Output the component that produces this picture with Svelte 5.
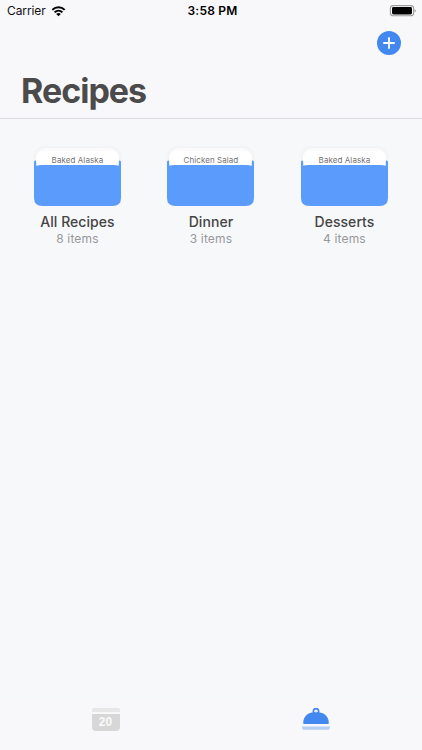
<script lang="ts">
  type Folder = { name: string; count: number; preview: string }

  const folders: Folder[] = [
    { name: 'All Recipes', count: 8, preview: 'Baked Alaska' },
    { name: 'Dinner', count: 3, preview: 'Chicken Salad' },
    { name: 'Desserts', count: 4, preview: 'Baked Alaska' },
  ]
</script>

<div class="screen">
  <header>
    <div class="status-bar">
      <div class="carrier">
        <span>Carrier</span>
        <svg width="15" height="11" viewBox="0 0 14 11">
          <g fill="none" stroke="#000" stroke-width="2">
            <path d="M0.8 3.9C4.3 0.5 9.7 0.5 13.2 3.9" />
            <path d="M3.1 6.4C5.3 4.3 8.7 4.3 10.9 6.4" />
          </g>
          <path d="M7 10.2L4.7 8C6 6.8 8 6.8 9.3 8Z" />
        </svg>
      </div>
      <span class="time">3:58 PM</span>
      <svg class="battery" width="28" height="12" viewBox="0 0 28 12">
        <rect x="1.4" y="0.6" width="23.2" height="10.2" rx="2.8" fill="#fff" stroke="#9b9b9d" stroke-width="1.1" />
        <rect x="3" y="2" width="20" height="7.4" rx="1.4" />
        <path d="M25.6 4C27.2 4.5 27.2 7 25.6 7.5Z" fill="#9b9b9d" />
      </svg>
    </div>

    <div class="actions">
      <button class="add" aria-label="Add folder">
        <svg width="24" height="24" viewBox="0 0 24 24">
          <path d="M12 6.9V17.1M6.9 12H17.1" stroke="#fff" stroke-width="1.8" stroke-linecap="round" />
        </svg>
      </button>
    </div>

    <h1>Recipes</h1>
  </header>

  <main>
    {#each folders as folder}
      <div class="item">
        <div class="folder">
          <div class="cards">
            <div class="card">{folder.preview}</div>
          </div>
          <svg class="pocket" width="87" height="47" viewBox="0 0 87 47">
            <path
              d="M0 2.4Q0 0.8 1.2 0.6Q2.2 0.6 2.2 2V5.8Q4.5 5 8 5H79Q82.5 5 84.8 5.8V2Q84.8 0.6 85.8 0.6Q87 0.8 87 2.4V38Q87 46 78.5 46H8.5Q0 46 0 38Z"
              fill="#5a9bfc"
            />
          </svg>
        </div>
        <div class="name">{folder.name}</div>
        <div class="count">{folder.count} items</div>
      </div>
    {/each}
  </main>

  <nav>
    <button class="tab" aria-label="Calendar">
      <div class="calendar">
        <div class="calendar-top"></div>
        <div class="calendar-page">20</div>
      </div>
    </button>
    <button class="tab" aria-label="Recipes">
      <svg width="28" height="23" viewBox="0 0 28 23">
        <circle cx="14" cy="3.2" r="2.6" fill="none" stroke="#4288ef" stroke-width="1.8" />
        <path d="M1.2 15C1.2 8 6.6 4.1 14 4.1S26.8 8 26.8 15Q26.8 16 25.8 16H2.2Q1.2 16 1.2 15Z" fill="#4288ef" />
        <ellipse cx="14" cy="3.3" rx="1.6" ry="1.1" fill="#e2ecfb" />
        <path d="M0 18.6H28V19.6Q28 21.8 25.8 21.8H2.2Q0 21.8 0 19.6Z" fill="#b4cdf6" />
      </svg>
    </button>
  </nav>
</div>

<style>
  :global(body) {
    margin: 0;
    background: #f7f8fa;
  }

  .screen {
    display: flex;
    flex-direction: column;
    height: 750px;
    overflow: hidden;
    background: #f7f8fa;
    font-family: Inter, 'Liberation Sans', sans-serif;
  }

  header {
    box-sizing: border-box;
    height: 119px;
    border-bottom: 1px solid #d9dadd;
    background: #f8f8fa;
  }

  .status-bar {
    display: grid;
    grid-template-columns: 1fr auto 1fr;
    align-items: center;
    height: 22px;
    padding: 0 5px 0 7px;
    font-size: 12px;
    color: #111;
  }

  .carrier {
    display: flex;
    align-items: center;
    gap: 5px;
    line-height: 14px;
    letter-spacing: -0.1px;
  }

  .time {
    padding-left: 1px;
    color: #000;
    font-weight: 600;
    line-height: 14px;
    letter-spacing: 0.2px;
  }

  .battery {
    justify-self: end;
  }

  .actions {
    display: flex;
    justify-content: flex-end;
    padding: 9px 21px 0;
  }

  button {
    padding: 0;
    border: 0;
    background: none;
    font-family: inherit;
  }

  .add {
    width: 24px;
    height: 24px;
    border-radius: 50%;
    background: #4288ef;
  }

  .add svg {
    display: block;
  }

  h1 {
    margin: 15px 0 0 21px;
    color: #4b4b4c;
    font-size: 34px;
    font-weight: 700;
    line-height: 42px;
    letter-spacing: -1px;
  }

  main {
    flex: 1;
    display: grid;
    grid-template-columns: repeat(3, 1fr);
    align-content: start;
    padding: 29px 10.8px 0 10.7px;
  }

  .item {
    display: flex;
    flex-direction: column;
    align-items: center;
  }

  .folder {
    display: flex;
    flex-direction: column;
    align-items: center;
    width: 87px;
    height: 59px;
  }

  .cards {
    box-sizing: border-box;
    width: 83px;
    height: 20px;
    padding-top: 3px;
    border-radius: 9px 9px 0 0;
    background: #fbfbfb;
    box-shadow: 0 0 4px rgba(110, 90, 60, 0.09);
  }

  .card {
    height: 17px;
    border-radius: 7px 7px 0 0;
    background: #fff;
    color: #737373;
    font-size: 8px;
    line-height: 18px;
    letter-spacing: 0.07px;
    text-align: center;
    white-space: nowrap;
  }

  .pocket {
    flex: none;
    margin-top: -8px;
  }

  .name {
    margin-top: 6px;
    color: #444;
    font-size: 14px;
    font-weight: 500;
    line-height: 18px;
    letter-spacing: 0.05px;
  }

  .count {
    color: #97989a;
    font-size: 12px;
    line-height: 15px;
    letter-spacing: 0.15px;
  }

  nav {
    display: grid;
    grid-template-columns: 1fr 1fr;
    height: 50px;
    background: #f8f8fa;
  }

  .tab {
    display: flex;
    justify-content: center;
    align-items: flex-start;
    padding: 8px 1px 0 0;
  }

  .tab:first-child {
    padding-right: 0;
  }

  .calendar {
    display: flex;
    flex-direction: column;
    gap: 2px;
    width: 28px;
  }

  .calendar-top {
    height: 4px;
    border-radius: 2px 2px 0 0;
    background: #e7e7e8;
  }

  .calendar-page {
    height: 17px;
    border-radius: 0 0 4px 4px;
    background: #d7d7d8;
    color: #fafafa;
    font-family: 'Liberation Sans', sans-serif;
    font-size: 12px;
    font-weight: 700;
    line-height: 17px;
    text-align: center;
  }
</style>
